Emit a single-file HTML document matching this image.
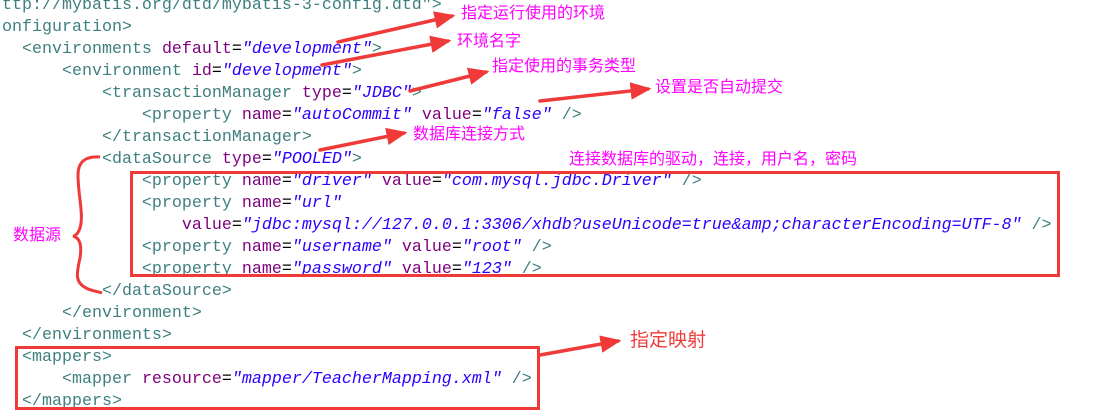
<!DOCTYPE html>
<html><head><meta charset="utf-8"><style>
html,body{margin:0;padding:0;background:#fff;width:1093px;height:413px;overflow:hidden;position:relative}
pre{position:absolute;left:2px;top:-5px;margin:0;font-family:"Liberation Mono",monospace;font-size:16.67px;line-height:22px;color:#3f7f7f;white-space:pre}
.a{color:#7f007f}.v{color:#2a00ff;font-style:italic}.e{color:#000}
.n{position:absolute;font-family:"Liberation Sans","Noto Sans CJK SC",sans-serif;color:#ff00ff;font-size:16px;line-height:18px;white-space:nowrap}
.box{position:absolute;border:3px solid #f03a3a;box-sizing:border-box}
svg{position:absolute;left:0;top:0}
</style></head><body>
<pre>ttp://mybatis.org/dtd/mybatis-3-config.dtd"&gt;
onfiguration&gt;
  &lt;environments <span class="a">default</span><span class="e">=</span><span class="v">"development"</span>&gt;
      &lt;environment <span class="a">id</span><span class="e">=</span><span class="v">"development"</span>&gt;
          &lt;transactionManager <span class="a">type</span><span class="e">=</span><span class="v">"JDBC"</span>&gt;
              &lt;property <span class="a">name</span><span class="e">=</span><span class="v">"autoCommit"</span> <span class="a">value</span><span class="e">=</span><span class="v">"false"</span> /&gt;
          &lt;/transactionManager&gt;
          &lt;dataSource <span class="a">type</span><span class="e">=</span><span class="v">"POOLED"</span>&gt;
              &lt;property <span class="a">name</span><span class="e">=</span><span class="v">"driver"</span> <span class="a">value</span><span class="e">=</span><span class="v">"com.mysql.jdbc.Driver"</span> /&gt;
              &lt;property <span class="a">name</span><span class="e">=</span><span class="v">"url"</span>
                  <span class="a">value</span><span class="e">=</span><span class="v">"jdbc:mysql://127.0.0.1:3306/xhdb?useUnicode=true&amp;amp;characterEncoding=UTF-8"</span> /&gt;
              &lt;property <span class="a">name</span><span class="e">=</span><span class="v">"username"</span> <span class="a">value</span><span class="e">=</span><span class="v">"root"</span> /&gt;
              &lt;property <span class="a">name</span><span class="e">=</span><span class="v">"password"</span> <span class="a">value</span><span class="e">=</span><span class="v">"123"</span> /&gt;
          &lt;/dataSource&gt;
      &lt;/environment&gt;
  &lt;/environments&gt;
  &lt;mappers&gt;
      &lt;mapper <span class="a">resource</span><span class="e">=</span><span class="v">"mapper/TeacherMapping.xml"</span> /&gt;
  &lt;/mappers&gt;</pre>
<div class="box" style="left:130px;top:171px;width:930px;height:106px"></div>
<div class="box" style="left:15px;top:346px;width:525px;height:64px"></div>
<svg width="1093" height="413">
<defs><marker id="h" markerWidth="6" markerHeight="5" refX="5" refY="2.5" orient="auto" markerUnits="strokeWidth"><path d="M0,0 L6,2.5 L0,5 Z" fill="#f03a3a"/></marker></defs>
<g stroke="#f03a3a" stroke-width="3.5" fill="none" marker-end="url(#h)" stroke-linecap="round">
<line x1="338" y1="42" x2="452" y2="16"/>
<line x1="322" y1="65" x2="448" y2="41"/>
<line x1="410" y1="91" x2="486" y2="72"/>
<line x1="540" y1="101" x2="648" y2="89"/>
<line x1="320" y1="150" x2="404" y2="133"/>
<line x1="540" y1="355" x2="618" y2="341"/>
</g>
<path d="M100,157 C85,156 78,162 78,175 C78,195 84,215 80,228 C78,234 75,236 73,236 C80,238 82,245 80,258 C77,272 74,282 86,288 C92,291 96,291 102,293" stroke="#f03a3a" stroke-width="3" fill="none"/>
</svg>
<div class="n" style="left:461px;top:5px">指定运行使用的环境</div>
<div class="n" style="left:457px;top:33px">环境名字</div>
<div class="n" style="left:492px;top:58px">指定使用的事务类型</div>
<div class="n" style="left:655px;top:79px">设置是否自动提交</div>
<div class="n" style="left:413px;top:126px">数据库连接方式</div>
<div class="n" style="left:569px;top:151px">连接数据库的驱动，连接，用户名，密码</div>
<div class="n" style="left:13px;top:227px">数据源</div>
<div class="n" style="left:630px;top:331px;color:#f03a3a;font-size:19px;line-height:20px">指定映射</div>
</body></html>
